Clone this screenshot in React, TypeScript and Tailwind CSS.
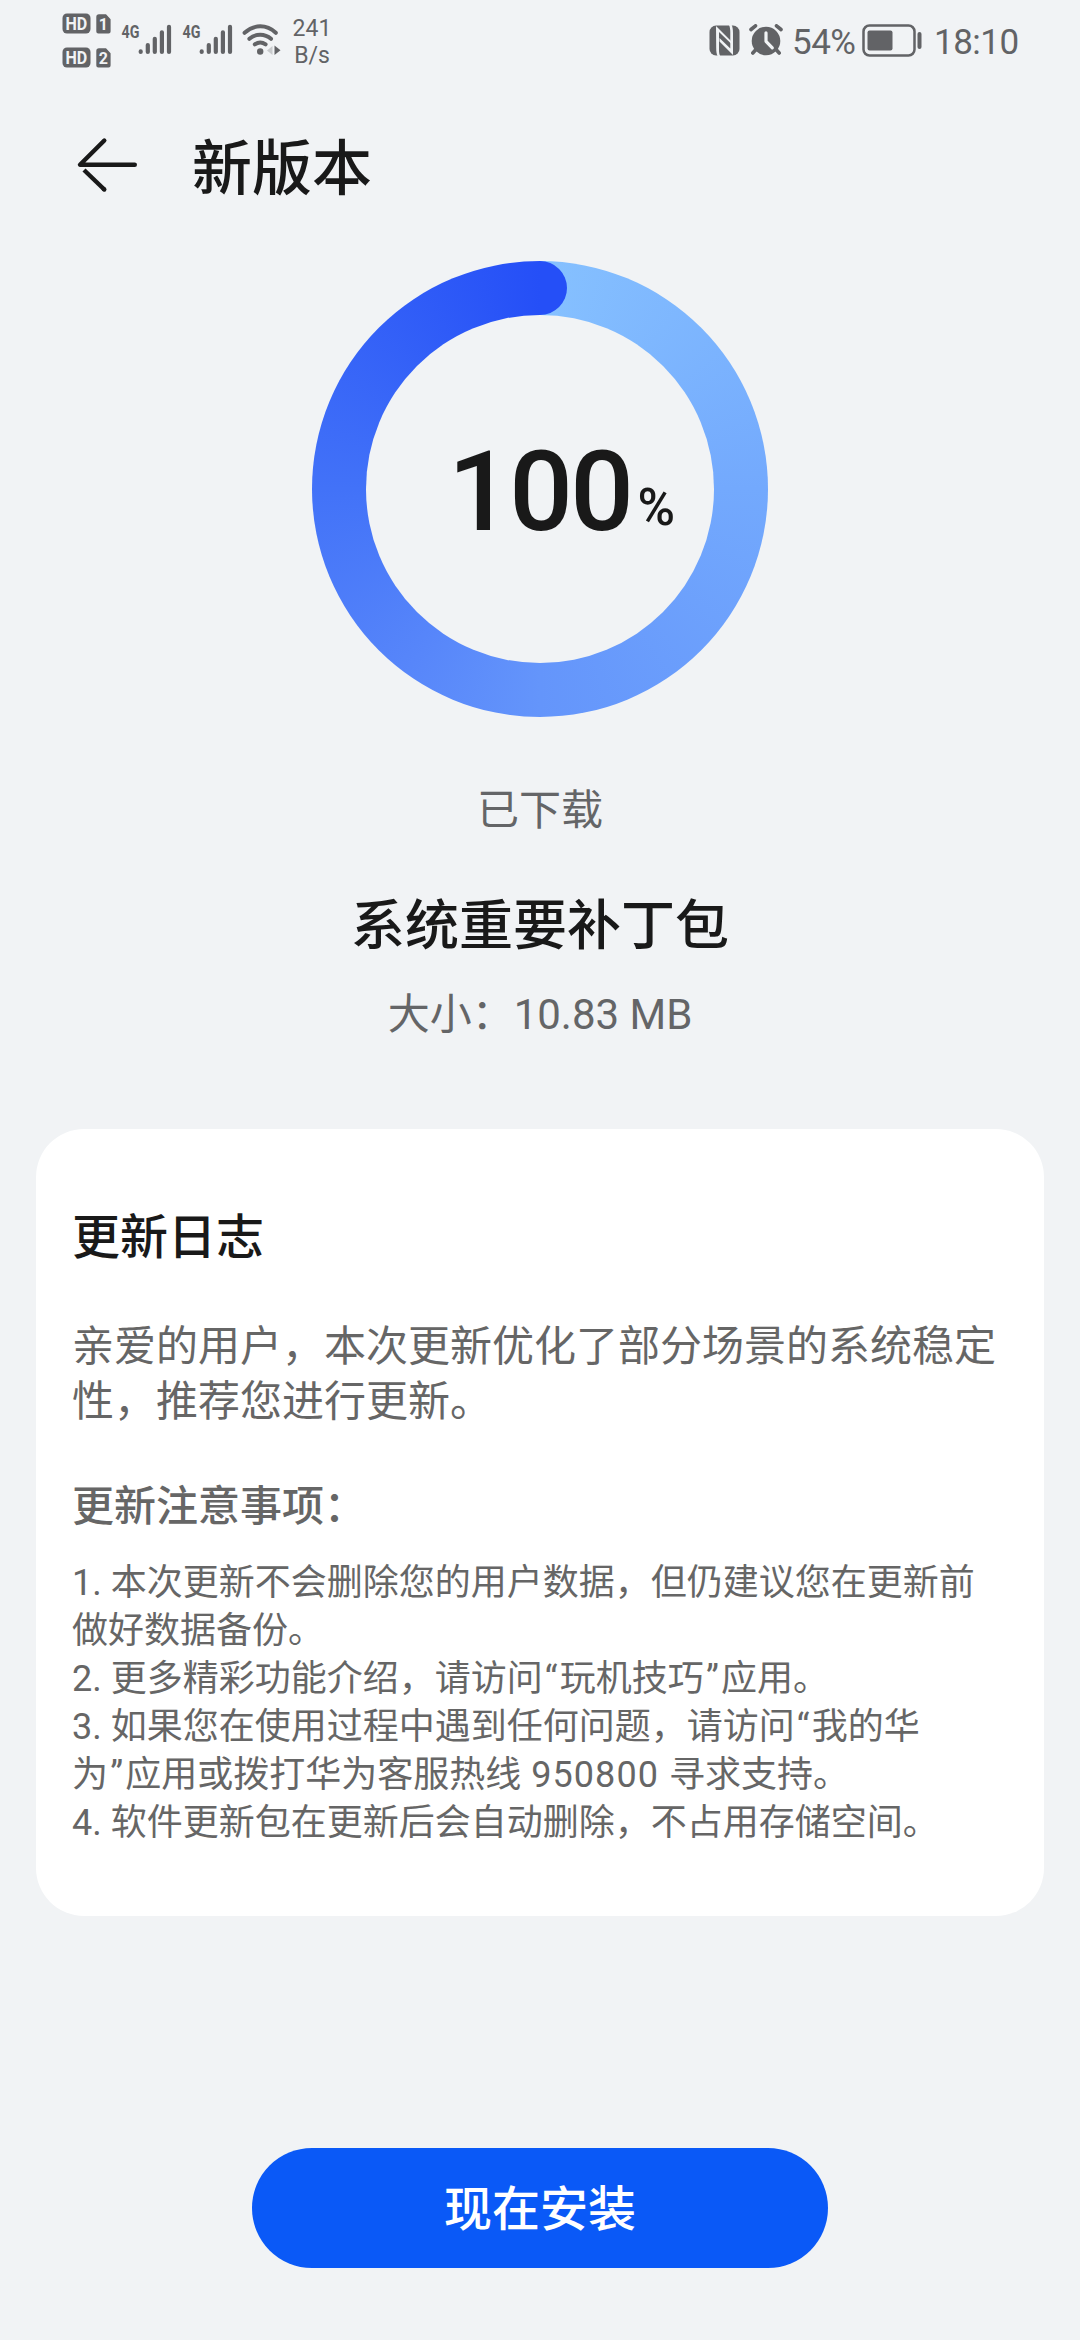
import React from "react";

function HdBadge({ sim }: { sim: string }) {
  return (
    <svg width="50" height="22" viewBox="0 0 50 22" className="block overflow-visible text-[#626366]">
      <rect x="0.5" y="0.5" width="28" height="20" rx="4.5" fill="currentColor" />
      <text transform="translate(3.4 16.7) scale(0.92 1)" fontSize="17.5" fontWeight="700" fill="#f1f3f5">HD</text>
      <path d="M37 1.2h7l4.6 5v12.3a2 2 0 0 1-2 2H36.3a2 2 0 0 1-2-2V4a2.800 2.800 0 0 1 2.700-2.800z" fill="currentColor" />
      <text x="41.300" y="17" fontSize="16" fontWeight="700" textAnchor="middle" fill="#f1f3f5">{sim}</text>
    </svg>
  );
}

function Signal() {
  return (
    <svg width="52" height="38" viewBox="0 -4 52 38" className="block overflow-visible text-[#626366]">
      <text transform="translate(0.5 15.4) scale(0.75 1)" fontSize="19" fontWeight="700" fill="currentColor">4G</text>
      <g stroke="currentColor" strokeWidth="4.200" strokeLinecap="round">
        <path d="M19.700 28.400v0.600M26.800 22.100v6.900M33.800 15.800V29M40.900 9.300V29M48 3.800V29" />
      </g>
    </svg>
  );
}

function Wifi() {
  return (
    <svg width="40" height="34" viewBox="0 0 40 34" className="block text-[#626366]">
      <g fill="none" stroke="currentColor" strokeWidth="4" strokeLinecap="round">
        <path d="M2.600 9.800C12 1.200 24.500 1.200 33.800 9.800" />
        <path d="M7.400 15.800c6.200-5.500 15.400-5.500 21.600 0" />
        <path d="M12.800 21.400c3.300-2.400 7.500-2.400 10.800 0" />
      </g>
      <circle cx="18.200" cy="28.500" r="3.200" fill="currentColor" />
      <path d="M30.500 23v9l-5.500-4.500z" fill="#c9cbcd" />
      <path d="M32.500 22.500v9.500l6-4.800z" fill="currentColor" />
    </svg>
  );
}

function Nfc() {
  return (
    <svg width="31" height="31" viewBox="0 0 31 31" className="block">
      <rect x="0.500" y="0.500" width="30" height="30" rx="6.500" fill="#626366" />
      <path d="M7 1L23.500 17.500V20L10 7V25c0 2.500.4 4.500 1.200 6H8.600C7.600 29 7.200 26.500 7.200 23z" fill="#f1f3f5" />
      <path d="M24 30L10.500 16.500V13L21.300 23.500V7c0-2.500-.4-5-1.300-7h2.600c1 2 1.400 4.500 1.400 8z" fill="#f1f3f5" />
    </svg>
  );
}

function Alarm() {
  return (
    <svg width="34" height="32" viewBox="0 0 34 32" className="block text-[#626366]">
      <circle cx="17" cy="17" r="14.300" fill="currentColor" />
      <path d="M2 5.500L6.500 1.800M32 5.500L27.500 1.800M6.500 26L3.800 29M27.500 26l2.700 3" stroke="currentColor" strokeWidth="3.600" strokeLinecap="round" />
      <path d="M17 8.800v8.500l6.300 6.600" fill="none" stroke="#f1f3f5" strokeWidth="3.200" strokeLinecap="round" strokeLinejoin="round" />
    </svg>
  );
}

function Battery() {
  return (
    <svg width="60" height="33" viewBox="0 0 60 33" className="block text-[#626366]">
      <rect x="1.500" y="1.500" width="51" height="30" rx="6" fill="none" stroke="currentColor" strokeWidth="2.500" />
      <rect x="5.500" y="6.500" width="25" height="20" rx="2" fill="currentColor" />
      <rect x="55.500" y="8" width="4" height="17" rx="2" fill="currentColor" />
    </svg>
  );
}

function StatusBar() {
  return (
    <div className="flex h-[80px] shrink-0 items-start text-[#626366]">
      <div className="ml-[62px] mt-[13px] flex flex-col gap-[12px]">
        <HdBadge sim="1" />
        <HdBadge sim="2" />
      </div>
      <div className="ml-[9px] mt-[19px] flex gap-[9px]">
        <Signal />
        <Signal />
      </div>
      <div className="ml-[8px] mt-[23px]">
        <Wifi />
      </div>
      <div className="ml-[9px] mt-[15px] w-[42px] text-center text-[23px] leading-[27px]">
        <div>241</div>
        <div>B/s</div>
      </div>
      <div className="ml-[376px] mt-[25px]">
        <Nfc />
      </div>
      <div className="ml-[9px] mt-[24px]">
        <Alarm />
      </div>
      <div className="ml-[9px] mt-[22px] w-[70px] whitespace-nowrap text-[35px] leading-[41px] tracking-[-0.5px]">54%</div>
      <div className="mt-[24px]">
        <Battery />
      </div>
      <div className="ml-[12px] mt-[22px] whitespace-nowrap text-[35px] leading-[41px] tracking-[-0.5px]">18:10</div>
    </div>
  );
}

function BackArrow() {
  return (
    <svg width="64" height="60" viewBox="0 0 64 60" className="block">
      <g fill="none" stroke="#191919" strokeWidth="4.400" strokeLinecap="round" strokeLinejoin="round">
        <path d="M29.300 5.500L5 29.700H59.800" />
        <path d="M9 35L29.300 54.500" strokeLinecap="butt" />
        <path d="M28.500 53.800l.8.700" />
      </g>
    </svg>
  );
}

function ProgressRing() {
  return (
    <div className="relative flex h-[456px] w-[456px] shrink-0 self-center">
      <div className="absolute inset-0 rounded-full bg-[conic-gradient(#86c1ff_0%,#73a9fd_25%,#6495fb_50%,#5786fa_60%,#4272f8_75%,#254ff7_100%)]" />
      <div className="absolute left-[228px] top-0 h-[54px] w-[27px] rounded-r-full bg-[#254ff7]" />
      <div className="absolute inset-[54px] rounded-full bg-[#f1f3f5]" />
      <div className="relative flex items-baseline pl-[136px] pt-[165px] font-medium text-[#191919]">
        <span className="text-[112px] leading-[132px] tracking-[-2.500px]">100</span>
        <span className="relative top-[-5px] ml-[6px] text-[51px] leading-none">%</span>
      </div>
    </div>
  );
}

const notes = [
  "1. 本次更新不会删除您的用户数据，但仍建议您在更新前",
  "做好数据备份。",
  "2. 更多精彩功能介绍，请访问“玩机技巧”应用。",
  "3. 如果您在使用过程中遇到任何问题，请访问“我的华",
  "为”应用或拨打华为客服热线 950800 寻求支持。",
  "4. 软件更新包在更新后会自动删除，不占用存储空间。",
];

function NoteLine({ text }: { text: string }) {
  return (
    <div>
      {text.split(/([“”]| \d{6} )/).map((part, i) => {
        if (part === "“" || part === "”") {
          return (
            <span key={i} className="px-[2.200px]">
              {part}
            </span>
          );
        }
        if (/^ \d{6} $/.test(part)) {
          return (
            <span key={i} className="tracking-[1.050px]">
              {part}
            </span>
          );
        }
        return part;
      })}
    </div>
  );
}

export default function App() {
  return (
    <div
      lang="zh-CN"
      className="flex h-[2340px] w-[1080px] flex-col overflow-hidden bg-[#f1f3f5] font-['Roboto','Noto_Sans_CJK_SC',sans-serif]"
    >
      <StatusBar />
      <header className="mt-[50px] flex h-[80px] shrink-0 items-center pl-[75px]">
        <button className="-mt-[10px]" aria-label="返回">
          <BackArrow />
        </button>
        <h1 className="ml-[53px] text-[60px] font-medium leading-[80px] text-[#191919]">新版本</h1>
      </header>
      <div className="mt-[51px] flex shrink-0 flex-col items-center">
        <ProgressRing />
        <p className="mt-[64px] text-[42px] leading-[60px] text-[#646567]">已下载</p>
        <h2 className="mt-[46px] text-[54px] font-medium leading-[80px] text-[#191919]">系统重要补丁包</h2>
        <p className="mt-[18px] text-[42px] leading-[60px] text-[#646567]">大小：10.83 MB</p>
      </div>
      <section className="mx-[36px] mt-[84px] h-[787px] shrink-0 rounded-[48px] bg-white pl-[36px] pt-[79px] text-[#666]">
        <h3 className="text-[48px] font-medium leading-[60px] text-[#191919]">更新日志</h3>
        <p className="mt-[51px] whitespace-nowrap text-[42px] leading-[55px]">
          亲爱的用户，本次更新优化了部分场景的系统稳定
          <br />
          性，推荐您进行更新。
        </p>
        <h4 className="mt-[48px] text-[42px] font-medium leading-[60px]">更新注意事项：</h4>
        <div className="mt-[22px] whitespace-nowrap text-[36px] leading-[48px]">
          {notes.map((line) => (
            <NoteLine key={line} text={line} />
          ))}
        </div>
      </section>
      <button className="mt-[232px] h-[120px] w-[576px] shrink-0 self-center rounded-full bg-[#0a59f7] pt-[4px] text-[48px] font-medium leading-[60px] text-white">
        现在安装
      </button>
    </div>
  );
}
